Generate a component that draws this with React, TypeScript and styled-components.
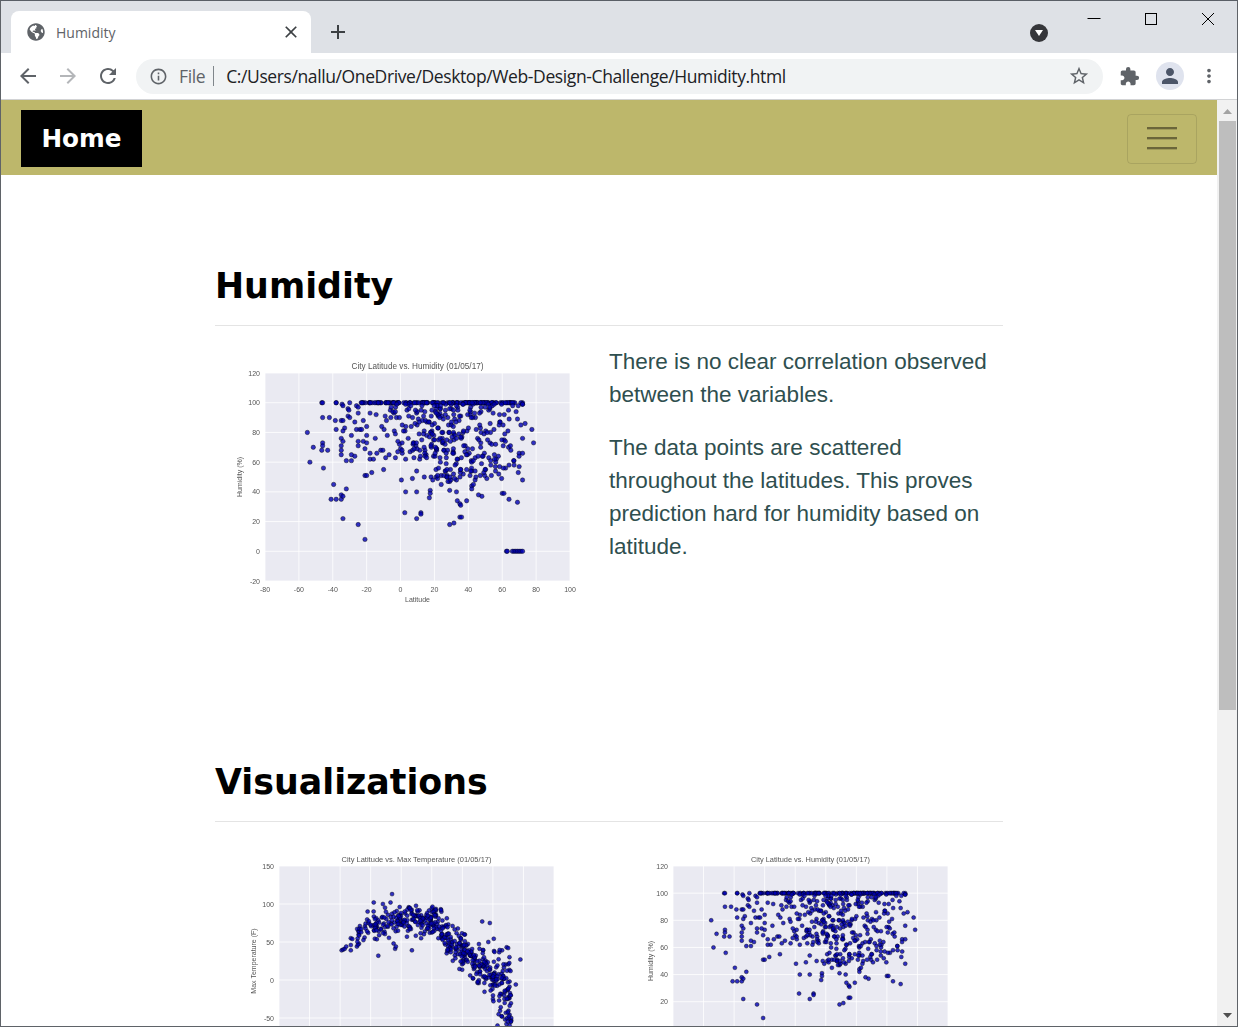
import React from 'react';
import styled, { createGlobalStyle } from 'styled-components';
import { FaGlobeAmericas } from 'react-icons/fa';
import {
  MdAdd,
  MdArrowBack,
  MdArrowForward,
  MdClose,
  MdExtension,
  MdInfoOutline,
  MdMoreVert,
  MdPerson,
  MdRefresh,
  MdStarBorder,
} from 'react-icons/md';

const GlobalStyle = createGlobalStyle`
  html, body {
    margin: 0;
    padding: 0;
    height: 100%;
    overflow: hidden;
    background: #fff;
  }
  * { box-sizing: border-box; }
`;

const S = {
  Window: styled.div`
    display: flex;
    flex-direction: column;
    width: 1238px;
    height: 1027px;
    border: 1px solid #5f6368;
    border-top-color: #5a5f66;
    overflow: hidden;
    background: #fff;
  `,
  TabStrip: styled.div`
    display: flex;
    align-items: flex-end;
    flex: 0 0 52px;
    background: #dee1e6;
    padding-left: 10px;
  `,
  Tab: styled.div`
    display: flex;
    align-items: center;
    width: 300px;
    height: 42px;
    padding: 0 10px 0 16px;
    background: #fff;
    border-radius: 8px 8px 0 0;
    color: #5f6368;
    font-family: 'Open Sans', sans-serif;
    font-size: 14px;
  `,
  TabTitle: styled.span`
    margin-left: 11px;
    flex: 1;
  `,
  NewTab: styled.div`
    display: flex;
    align-items: center;
    height: 42px;
    margin-left: 15px;
    color: #3c4043;
    stroke: #3c4043;
    stroke-width: 1.2px;
  `,
  DropBadge: styled.div`
    display: flex;
    align-items: center;
    justify-content: center;
    width: 18px;
    height: 18px;
    margin: 0 0 11px 680px;
    border-radius: 50%;
    background: #35363a;
  `,
  WindowControls: styled.div`
    position: absolute;
    top: 1px;
    right: 2px;
    display: flex;
    color: #000;
  `,
  WindowButton: styled.div`
    display: flex;
    align-items: center;
    justify-content: center;
    width: 57px;
    height: 36px;
  `,
  Toolbar: styled.div`
    display: flex;
    align-items: center;
    flex: 0 0 47px;
    padding: 0 0 0 15px;
    background: #fff;
    border-bottom: 1px solid #d2d3d5;
    color: #5f6368;
  `,
  NavButton: styled.div<{ $dim?: boolean }>`
    display: flex;
    width: 24px;
    margin-right: 16px;
    color: ${(p) => (p.$dim ? '#b4b6b9' : '#5f6368')};
  `,
  Omnibox: styled.div`
    display: flex;
    align-items: center;
    width: 967px;
    height: 35px;
    padding: 0 13px 0 13px;
    border-radius: 18px;
    background: #f1f3f4;
    font-family: 'Open Sans', sans-serif;
    font-size: 17.5px;
    letter-spacing: -0.39px;
  `,
  FileLabel: styled.span`
    margin-left: 11px;
    padding-right: 8px;
    border-right: 1px solid #80868b;
    line-height: 20px;
    color: #5f6368;
  `,
  Url: styled.span`
    flex: 1;
    margin-left: 12px;
    color: #202124;
  `,
  ToolIcons: styled.div`
    display: flex;
    align-items: center;
    margin-left: 16px;
  `,
  Avatar: styled.div`
    display: flex;
    align-items: center;
    justify-content: center;
    width: 28px;
    height: 28px;
    margin: 0 14px 0 16px;
    border-radius: 50%;
    background: #dfe3ee;
    color: #4b5568;
  `,
  Viewport: styled.div`
    display: flex;
    flex: 1;
    min-height: 0;
  `,
  Page: styled.div`
    flex: 1;
    min-width: 0;
    overflow: hidden;
  `,
  Navbar: styled.nav`
    display: flex;
    align-items: center;
    justify-content: space-between;
    height: 75px;
    padding: 2px 20px 0;
    background: #bdb76b;
  `,
  Brand: styled.a`
    display: flex;
    align-items: center;
    justify-content: center;
    width: 121px;
    height: 57px;
    background: #000;
    color: #fff;
    font-family: 'DejaVu Sans', Verdana, sans-serif;
    font-size: 24.7px;
    font-weight: 700;
  `,
  Toggler: styled.div`
    display: flex;
    flex-direction: column;
    align-items: center;
    justify-content: center;
    gap: 8px;
    width: 70px;
    height: 50px;
    padding-bottom: 2px;
    border: 1px solid rgba(0, 0, 0, 0.1);
    border-radius: 4px;
  `,
  TogglerBar: styled.span`
    width: 30px;
    height: 2px;
    background: #6b653a;
    box-shadow: 0 1px 0 rgba(107, 101, 58, 0.35);
  `,
  Container: styled.main`
    width: 788px;
    margin: 0 0 0 214px;
  `,
  Section: styled.section<{ $top: number }>`
    padding-top: ${(p) => p.$top}px;
  `,
  Heading: styled.h1`
    margin: 0;
    padding-bottom: 17px;
    border-bottom: 1px solid #e4e4e4;
    color: #000;
    font-family: 'DejaVu Sans', Verdana, sans-serif;
    font-size: 34.8px;
    font-weight: 700;
    line-height: 43px;
  `,
  Columns: styled.div`
    display: grid;
    grid-template-columns: 394px 394px;
    margin-top: 8px;
  `,
  Copy: styled.div`
    padding-top: 11px;
    color: #2f4f4f;
    font-family: 'Liberation Sans', Arial, sans-serif;
    font-size: 22.5px;
    line-height: 33px;
  `,
  Paragraph: styled.p`
    margin: 0 0 20px;
  `,
  ChartSvg: styled.svg`
    display: block;
    filter: blur(0.4px);
  `,
  ChartTitle: styled.text<{ $size: number }>`
    fill: #555;
    font-family: 'Liberation Sans', Arial, sans-serif;
    font-size: ${(p) => p.$size}px;
  `,
  TickLabel: styled.text`
    fill: #555;
    font-family: 'Liberation Sans', Arial, sans-serif;
    font-size: 7px;
  `,
  Scrollbar: styled.div`
    display: flex;
    flex-direction: column;
    align-items: center;
    flex: 0 0 20px;
    padding: 0 1px;
    background: #f1f1f1;
  `,
  ScrollArrow: styled.div`
    display: flex;
    align-items: center;
    justify-content: center;
    flex: 0 0 21px;
  `,
  ScrollThumb: styled.div`
    width: 17px;
    height: 589px;
    background: #bebebe;
  `,
  ScrollRest: styled.div`
    flex: 1;
  `,
};

type Point = [number, number];

// same small generator every run, so the scatter stays put between renders
function makeRandom(seed: number) {
  let s = seed;
  return () => {
    s = (s * 16807) % 2147483647;
    return (s - 1) / 2147483646;
  };
}

const humiditySparse: Point[] = [
  [-55, 80], [-53.5, 60], [-51.5, 70], [-46.5, 100], [-46, 100], [-46, 90], [-42, 90], [-46, 73], [-46, 71],
  [-46.5, 68], [-43, 68], [-45.5, 56], [-39.5, 45], [-41, 35], [-38, 35], [-35, 35], [-35, 38], [-34, 37],
  [-32, 42], [-34, 22], [-25, 18], [-21, 8], [-38, 100], [-38.5, 88], [-38, 82], [-35, 88], [-34, 88],
  [-33, 83], [-34, 81], [-35, 76], [-34, 74], [-35, 71], [-35, 68], [-35, 65], [-32, 61], [-29, 61], [-29, 65],
  [-27, 64], [-29, 78], [-25, 74], [-25, 71], [-22, 74], [-20, 73], [-21, 69], [-18, 66], [-14, 66], [-21, 51],
  [-20, 51], [-17, 53], [-10, 55], [-18, 62], [-16, 62], [0, 69], [1, 66], [3, 62], [0.5, 48], [7, 49], [3, 40],
  [9.5, 40], [9.5, 54], [14, 50], [18, 50], [19, 48], [21, 50], [24, 45], [17.5, 41], [17.5, 39], [17, 36],
  [2.5, 26], [9.5, 22], [12, 26], [12, 25], [29, 18], [31.5, 19], [35, 23], [36, 23], [29, 41], [33, 40],
  [33.5, 34], [35, 32], [35.5, 31], [39, 34], [33, 48], [29, 47], [28, 47], [37, 52], [39, 55], [41, 51],
  [42, 44], [42, 42], [43, 45], [44, 48], [42, 54], [46, 38], [48, 37], [60, 39], [61, 39], [64, 35], [69, 33],
  [62.5, 0], [63, 0], [66, 0], [67, 0], [68, 0], [69, 0], [70, 0], [71, 0], [72, 0], [77.5, 82], [78.5, 73],
  [73.5, 86], [71, 85], [69, 89], [70, 66], [70, 57], [67, 58], [62, 56], [58.5, 57], [64, 58],
  [-38, 100], [-34.5, 99], [-34, 98], [-30, 100], [-31, 96], [-30.5, 95], [-31, 91], [-30, 90], [-26, 98],
  [-25, 97], [-25, 93], [-27, 87], [-26, 82], [-24, 82], [-23, 82], [-22, 88], [-20, 84], [-20, 78],
];

function buildHumidity(): Point[] {
  const rnd = makeRandom(4217);
  const pts: Point[] = [...humiditySparse];
  for (let i = 0; i < 130; i++) {
    pts.push([-24 + rnd() * 96, 100]);
  }
  for (let i = 0; i < 330; i++) {
    // more cities towards the northern mid latitudes, thinning out near 70
    const lat = -24 + (rnd() * 0.55 + rnd() * 0.45) * 97 + (rnd() < 0.3 ? 18 : 0);
    const depth = lat > 20 ? 52 : 38;
    const hum = 100 - Math.pow(rnd(), 1.3) * depth;
    pts.push([Math.min(lat, 72), Math.round(hum)]);
  }
  return pts;
}

const temperatureSparse: Point[] = [
  [-39, 39], [-38, 40], [-37, 41], [-36, 44], [-33, 55], [-32, 54], [-33, 46], [-33, 39], [-29, 44], [-28, 64],
  [-24, 56], [-22, 90], [-18, 102], [-15, 32], [-12, 100], [-7, 102], [-6, 113], [-5, 48], [-4, 41], [-3.5, 44],
  [-1, 96], [7, 39], [13, 55], [47, 2], [53, 77], [58, 75], [57, 50], [75, -6], [78, 27],
  [66, 39], [69, 43], [70, 42], [60, -25], [66, -48], [68, -52], [72, -53], [72, -50], [71, -60],
];

function temperatureCurve(lat: number) {
  if (lat < 0) return 78 - Math.pow(lat / 40, 2) * 30;
  if (lat < 20) return 78 + lat * 0.1;
  return 80 - (lat - 20) * 2;
}

function buildTemperature(): Point[] {
  const rnd = makeRandom(9931);
  const pts: Point[] = [...temperatureSparse];
  for (let i = 0; i < 500; i++) {
    const lat = -30 + Math.pow(rnd(), 0.75) * 102;
    const wide = lat > 60 ? 64 : lat > 20 ? 32 : 22;
    const noise = (rnd() + rnd() - 1) * wide;
    pts.push([lat, temperatureCurve(lat) + noise]);
  }
  return pts;
}

const humidityPoints = buildHumidity();
const temperaturePoints = buildTemperature();

type ChartProps = {
  title: string;
  titleSize: number;
  yLabel: string;
  points: Point[];
  plot: { left: number; top: number; width: number; height: number };
  yRange: [number, number];
  yTicks: number[];
  radius: number;
  labelX: number;
  xAxis?: boolean;
};

function ScatterChart({ title, titleSize, yLabel, points, plot, yRange, yTicks, radius, labelX, xAxis }: ChartProps) {
  const xTicks = [-80, -60, -40, -20, 0, 20, 40, 60, 80, 100];
  const sx = (v: number) => plot.left + ((v + 80) / 180) * plot.width;
  const sy = (v: number) => plot.top + ((yRange[1] - v) / (yRange[1] - yRange[0])) * plot.height;
  const bottom = plot.top + plot.height;
  const midY = plot.top + plot.height / 2;

  return (
    <S.ChartSvg width={394} height={300} viewBox="0 0 394 300">
      <rect x={plot.left} y={plot.top} width={plot.width} height={plot.height} fill="#eaeaf2" />
      {xTicks.map((t) => (
        <line key={t} x1={sx(t)} x2={sx(t)} y1={plot.top} y2={bottom} stroke="#fff" strokeWidth="0.8" />
      ))}
      {yTicks.map((t) => (
        <line key={t} x1={plot.left} x2={plot.left + plot.width} y1={sy(t)} y2={sy(t)} stroke="#fff" strokeWidth="0.8" />
      ))}
      {points.map(([x, y], i) => (
        <circle key={i} cx={sx(x)} cy={sy(y)} r={radius} fill="#0000b4" fillOpacity="0.8" stroke="#000" strokeWidth="0.4" />
      ))}
      <S.ChartTitle $size={titleSize} x={plot.left + plot.width / 2} y={plot.top - 4} textAnchor="middle">
        {title}
      </S.ChartTitle>
      {yTicks.map((t) => (
        <S.TickLabel key={t} x={plot.left - 5} y={sy(t) + 2.5} textAnchor="end">
          {t}
        </S.TickLabel>
      ))}
      {/* the lower charts run past the fold, so their x axis is never on screen */}
      {xAxis &&
        xTicks.map((t) => (
          <S.TickLabel key={t} x={sx(t)} y={bottom + 11} textAnchor="middle">
            {t}
          </S.TickLabel>
        ))}
      {xAxis && (
        <S.TickLabel x={plot.left + plot.width / 2} y={bottom + 21} textAnchor="middle">
          Latitude
        </S.TickLabel>
      )}
      <S.TickLabel x={labelX} y={midY} textAnchor="middle" transform={`rotate(-90 ${labelX} ${midY})`}>
        {yLabel}
      </S.TickLabel>
    </S.ChartSvg>
  );
}

function BrowserChrome() {
  return (
    <>
      <S.TabStrip>
        <S.Tab>
          <FaGlobeAmericas size={18} />
          <S.TabTitle>Humidity</S.TabTitle>
          <MdClose size={20} color="#3c4043" />
        </S.Tab>
        <S.NewTab>
          <MdAdd size={24} />
        </S.NewTab>
        <S.DropBadge>
          <svg width="10" height="8" viewBox="0 0 10 8">
            <path d="M1 1h8L5 7z" fill="#fff" />
          </svg>
        </S.DropBadge>
        <S.WindowControls>
          <S.WindowButton>
            <svg width="14" height="14" viewBox="0 0 14 14">
              <path d="M0.5 6.5h13" stroke="#000" fill="none" />
            </svg>
          </S.WindowButton>
          <S.WindowButton>
            <svg width="14" height="14" viewBox="0 0 14 14">
              <rect x="1.5" y="1.5" width="11" height="11" stroke="#000" fill="none" />
            </svg>
          </S.WindowButton>
          <S.WindowButton>
            <svg width="14" height="14" viewBox="0 0 14 14">
              <path d="M1 1l12 12M13 1L1 13" stroke="#000" fill="none" />
            </svg>
          </S.WindowButton>
        </S.WindowControls>
      </S.TabStrip>
      <S.Toolbar>
        <S.NavButton>
          <MdArrowBack size={24} />
        </S.NavButton>
        <S.NavButton $dim>
          <MdArrowForward size={24} />
        </S.NavButton>
        <S.NavButton>
          <MdRefresh size={26} />
        </S.NavButton>
        <S.Omnibox>
          <MdInfoOutline size={19} />
          <S.FileLabel>File</S.FileLabel>
          <S.Url>C:/Users/nallu/OneDrive/Desktop/Web-Design-Challenge/Humidity.html</S.Url>
          <MdStarBorder size={22} />
        </S.Omnibox>
        <S.ToolIcons>
          <MdExtension size={21} />
          <S.Avatar>
            <MdPerson size={24} />
          </S.Avatar>
          <MdMoreVert size={22} />
        </S.ToolIcons>
      </S.Toolbar>
    </>
  );
}

export default function App() {
  return (
    <>
      <GlobalStyle />
      <S.Window>
        <BrowserChrome />
        <S.Viewport>
          <S.Page>
            <S.Navbar>
              <S.Brand>Home</S.Brand>
              <S.Toggler>
                <S.TogglerBar />
                <S.TogglerBar />
                <S.TogglerBar />
              </S.Toggler>
            </S.Navbar>
            <S.Container>
              <S.Section $top={90}>
                <S.Heading>Humidity</S.Heading>
                <S.Columns>
                  <ScatterChart
                    title="City Latitude vs. Humidity (01/05/17)"
                    titleSize={8.2}
                    yLabel="Humidity (%)"
                    points={humidityPoints}
                    plot={{ left: 50, top: 39, width: 305, height: 208 }}
                    yRange={[-20, 120]}
                    yTicks={[-20, 0, 20, 40, 60, 80, 100, 120]}
                    radius={2.2}
                    labelX={27}
                    xAxis
                  />
                  <S.Copy>
                    <S.Paragraph>There is no clear correlation observed between the variables.</S.Paragraph>
                    <S.Paragraph>
                      The data points are scattered throughout the latitudes. This proves prediction hard for humidity
                      based on latitude.
                    </S.Paragraph>
                  </S.Copy>
                </S.Columns>
              </S.Section>
              <S.Section $top={127}>
                <S.Heading>Visualizations</S.Heading>
                <S.Columns>
                  <ScatterChart
                    title="City Latitude vs. Max Temperature (01/05/17)"
                    titleSize={7.5}
                    yLabel="Max Temperature (F)"
                    points={temperaturePoints}
                    plot={{ left: 64, top: 36, width: 275, height: 190 }}
                    yRange={[-100, 150]}
                    yTicks={[-50, 0, 50, 100, 150]}
                    radius={2}
                    labelX={41}
                  />
                  <ScatterChart
                    title="City Latitude vs. Humidity (01/05/17)"
                    titleSize={7.4}
                    yLabel="Humidity (%)"
                    points={humidityPoints.filter(([, y]) => y > 5)}
                    plot={{ left: 64, top: 36, width: 275, height: 190 }}
                    yRange={[-20, 120]}
                    yTicks={[20, 40, 60, 80, 100, 120]}
                    radius={2}
                    labelX={44}
                  />
                </S.Columns>
              </S.Section>
            </S.Container>
          </S.Page>
          <S.Scrollbar>
            <S.ScrollArrow>
              <svg width="9" height="6" viewBox="0 0 9 6">
                <path d="M0 6l4.5-5L9 6z" fill="#a3a3a3" />
              </svg>
            </S.ScrollArrow>
            <S.ScrollThumb />
            <S.ScrollRest />
            <S.ScrollArrow>
              <svg width="9" height="6" viewBox="0 0 9 6">
                <path d="M0 0l4.5 5L9 0z" fill="#505050" />
              </svg>
            </S.ScrollArrow>
          </S.Scrollbar>
        </S.Viewport>
      </S.Window>
    </>
  );
}
